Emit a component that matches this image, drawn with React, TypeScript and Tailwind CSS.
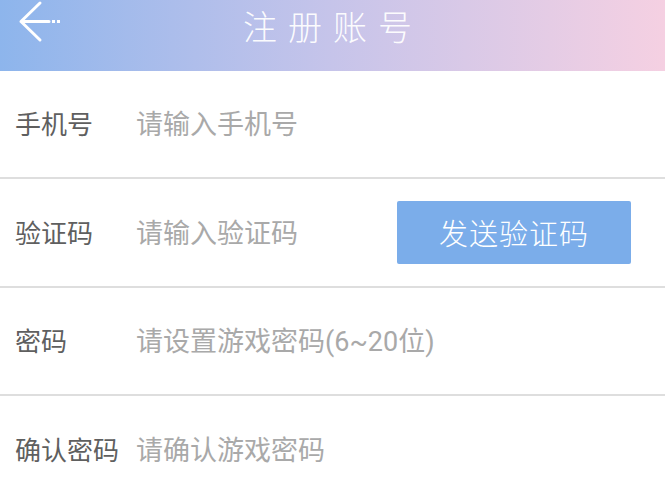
import React from "react";

const FONT = "font-['Roboto','Noto_Sans_CJK_SC',sans-serif]";

const ROWS = [
  { label: "手机号", placeholder: "请输入手机号", h: "h-[108px]" },
  { label: "验证码", placeholder: "请输入验证码", action: "发送验证码", h: "h-[109px]" },
  { label: "密码", placeholder: "请设置游戏密码(6~20位)", h: "h-[108px]" },
  { label: "确认密码", placeholder: "请确认游戏密码", h: "h-[108px]" },
];

function BackArrow() {
  return (
    <svg width="50" height="44" viewBox="0 0 50 44" fill="none">
      <path
        d="M24 3 L5 21.5 L24 40 M5 21.5 L33 21.5"
        stroke="white"
        strokeWidth="3"
        strokeLinecap="round"
        strokeLinejoin="round"
      />
      <rect x="36" y="20" width="3" height="3" fill="white" />
      <rect x="41" y="20" width="3" height="3" fill="white" />
    </svg>
  );
}

export default function App() {
  return (
    <div className={`w-[665px] h-[482px] bg-white overflow-hidden ${FONT}`}>
      {/* 顶栏 */}
      <div className="h-[71px] flex items-start bg-gradient-to-r from-[#8db5ec] via-[#c6c4ea] to-[#f5d0e2] relative">
        <div className="pl-4 pt-0">
          <BackArrow />
        </div>
        <div className="absolute left-0 right-0 top-[3px] flex justify-center">
          <span className="font-['Noto_Sans_CJK_SC',sans-serif] text-[34px] leading-[46px] font-light tracking-[11px] text-white/95 pl-[11px] ml-[-10px]">
            注册账号
          </span>
        </div>
      </div>

      {/* 表单 */}
      <div>
        {ROWS.map((r, i) => (
          <div
            key={r.label}
            className={`flex items-center px-[15px] pt-[3px] ${r.h} ${
              i < ROWS.length - 1 ? "border-b-2 border-[#dedede]" : ""
            }`}
          >
            <span className="w-[121px] shrink-0 text-[26px] text-[#5f5f5f]">{r.label}</span>
            <span className="flex-1 text-[27px] text-[#a9a9a9]">{r.placeholder}</span>
            {r.action ? (
              <button className="w-[234px] h-[63px] mr-[19px] mt-[-3px] bg-[#7badea] rounded-[2px] text-white text-[29px] font-light tracking-[1px] font-['Noto_Sans_CJK_SC',sans-serif]">
                {r.action}
              </button>
            ) : null}
          </div>
        ))}
      </div>
    </div>
  );
}
